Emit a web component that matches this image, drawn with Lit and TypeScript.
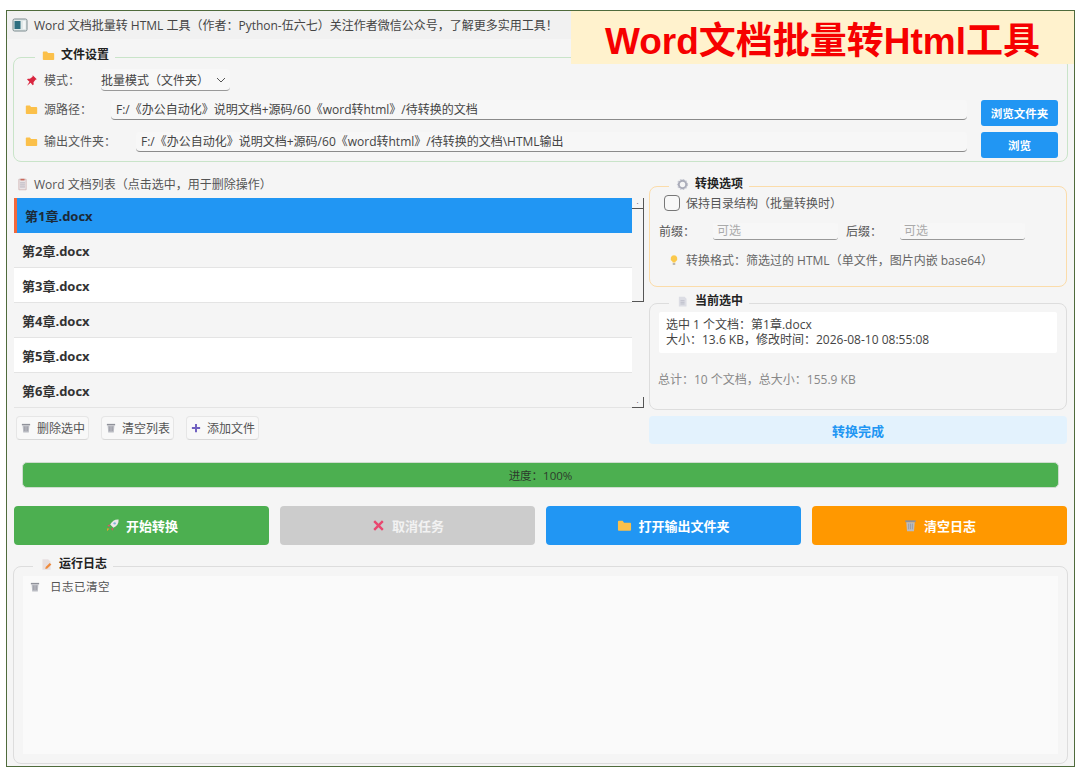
import { LitElement, html, css } from "lit";
import { customElement } from "lit/decorators.js";

const folder = html`<svg class="ic" viewBox="0 0 16 16"><path d="M1 4a1 1 0 0 1 1-1h4l1.5 2H14a1 1 0 0 1 1 1v6.5a1 1 0 0 1-1 1H2a1 1 0 0 1-1-1z" fill="#fbc04a"/></svg>`;
const trash = html`<svg class="ic" viewBox="0 0 16 16"><path d="M2.5 2.5h11v2h-11z" fill="#8f9199"/><path d="M3.5 4.5h9l-.8 9.5H4.3z" fill="#b9bbc2"/><path d="M6 6v6M8 6v6M10 6v6" stroke="#93959d" stroke-width=".8"/></svg>`;
const pin = html`<svg class="ic" viewBox="0 0 16 16"><path d="M9.5 1.5l5 5-1.6.6-2.4 3.2.2 2.6-1.2 1-2.6-3L2.5 14.5l3-5-3-2.6 1-1.2 2.6.2 3.2-2.4z" fill="#d9263f"/></svg>`;
const memo = html`<svg class="ic" viewBox="0 0 16 16"><path d="M3.5 1.5h9v13h-9z" fill="#e9e4e6" stroke="#c9a8a8" stroke-width=".8"/><path d="M5.5 1h5v2h-5z" fill="#c96a5c"/><path d="M5 6h6M5 8.5h6M5 11h6" stroke="#a8a3b0" stroke-width=".9"/></svg>`;
const gear = html`<svg class="ic" viewBox="0 0 16 16"><circle cx="8" cy="8" r="4.6" fill="none" stroke="#a9abb8" stroke-width="2.4"/><circle cx="8" cy="8" r="6.2" fill="none" stroke="#c6c8d2" stroke-width="1.4" stroke-dasharray="2 1.6"/></svg>`;
const doc = html`<svg class="ic" viewBox="0 0 16 16"><path d="M3.5 2h7l2.500 2.500V14h-9.500z" fill="#dcdde4"/><path d="M5.500 7h5M5.500 9h5M5.500 11h5" stroke="#b3b5c2" stroke-width=".9"/></svg>`;
const bulb = html`<svg class="ic" viewBox="0 0 16 16"><path d="M8 1.500a4.500 4.500 0 0 0-2.600 8.100c.6.500.8 1 .8 1.600h3.600c0-.6.200-1.100.8-1.600A4.500 4.500 0 0 0 8 1.500z" fill="#fbc94c"/><path d="M6.300 12.300h3.400v2H6.300z" fill="#a9a49a"/></svg>`;
const plus = html`<svg class="ic" viewBox="0 0 16 16"><path d="M6.700 2.500h2.600v4.200h4.200v2.600H9.300v4.200H6.700V9.300H2.500V6.700h4.200z" fill="#6f5fc0"/></svg>`;
const rocket = html`<svg class="ic" viewBox="0 0 16 16"><path d="M14.500 1.500c-4-.3-7 1.500-9 5.500l3.500 3.500c4-2 5.800-5 5.500-9z" fill="#ece7ea"/><circle cx="10.300" cy="5.700" r="1.300" fill="#7fb3d9"/><path d="M5.500 7L2.500 7.800 4.500 9.500zM9 10.500L8.200 13.500 6.500 11.500z" fill="#e0506a"/><path d="M4.500 11.500L2 14l.5-3z" fill="#f5a623"/></svg>`;
const cross = html`<svg class="ic" viewBox="0 0 16 16"><path d="M2.500 4.300l1.800-1.800L8 6.200l3.700-3.700 1.800 1.800L9.800 8l3.700 3.700-1.800 1.800L8 9.800l-3.700 3.700-1.800-1.800L6.200 8z" fill="#e9476f"/></svg>`;
const note = html`<svg class="ic" viewBox="0 0 16 16"><path d="M3 1.500h7l3 3V14.500H3z" fill="#e7dfe0"/><path d="M7 11l5-5 2 2-5 5-2.500.5z" fill="#ef8a3c"/></svg>`;
const app = html`<svg class="appic" viewBox="0 0 16 16"><rect x="1" y="2" width="14" height="12" rx="1.500" fill="#dfe8e8" stroke="#7d8b8f"/><rect x="2.500" y="4" width="6" height="8" fill="#2f6f80"/><rect x="11" y="4" width="2.500" height="8" fill="#f4f6f6"/></svg>`;

@customElement("app-root")
export class AppRoot extends LitElement {
  static styles = css`
    :host { display: block; height: 777px; background: #fff; font-family: "Open Sans", "Noto Sans CJK SC", sans-serif; font-size: 12px; color: #555; overflow: hidden; }
    * { box-sizing: border-box; }
    .shell { padding: 10px 5px 0 6px; }
    .frame { position: relative; height: 757px; border: 1px solid #4f6b3c; background: #f5f5f5; padding: 0 6px; }
    .ic { width: 13px; height: 13px; flex: none; display: block; }
    .titlebar { height: 28px; margin: 0 -6px; padding: 0 5px; display: flex; align-items: center; gap: 6px; background: #f1f1f1; color: #444; font-size: 12px; white-space: nowrap; }
    .appic { width: 16px; height: 16px; flex: none; }
    .banner { position: absolute; top: 0; right: 0; width: 503px; height: 53px; background: #fff2cd; color: #f60000; font: bold 37px "Liberation Sans", "Noto Sans CJK SC", sans-serif; display: flex; align-items: center; justify-content: center; padding-right: 0; white-space: nowrap; }
    fieldset { margin: 0; min-width: 0; border: 1px solid #ddd; border-radius: 8px; padding: 0; display: block; }
    legend { margin-left: 10px; padding: 0 6px 0 7px; height: 16px; display: flex; align-items: center; gap: 6px; font-weight: 700; color: #222; font-size: 12px; line-height: 14px; position: relative; top: -2px; }
    .files { margin-top: 10px; height: 113px; border-color: #c9e4c9; padding: 2px 9px 0 11px; }
    .row { display: flex; align-items: center; gap: 6px; }
    .mode { height: 22px; margin-top: 2px; }
    .combo { margin-left: 15px; width: 129px; height: 22px; border-radius: 4px; border-bottom: 1px solid #999; background: #f8f8f8; display: flex; align-items: center; justify-content: space-between; padding: 0 0 0 0; color: #444; }
    .chev { width: 10px; height: 6px; margin-right: 4px; }
    .path { align-items: flex-start; margin-top: 9px; height: 26px; }
    .path + .path { margin-top: 6px; }
    .path .lab { line-height: 20px; }
    .path .ic { margin-top: 3px; }
    .input { flex: 1; height: 20px; line-height: 19px; background: #f7f7f7; border-bottom: 1.500px solid #8a8a8a; border-radius: 4px; padding-left: 5px; color: #444; }
    .i1 { margin-left: 13px; }
    .i2 { margin-left: 14px; }
    .browse { width: 77px; height: 26px; margin-left: 8px; border-radius: 3px; background: #2196f3; color: #fff; font-weight: 700; display: flex; align-items: center; justify-content: center; font-size: 11.500px; }
    .main { display: grid; grid-template-columns: 631px 418px; gap: 5px; margin-top: 12px; height: 270px; }
    .lhead { height: 16px; margin: 2px 0 6px 3px; display: flex; align-items: center; gap: 5px; color: #555; }
    .listwrap { display: flex; margin-left: 1px; height: 210px; }
    .list { width: 618px; }
    .item { height: 35px; padding-left: 8px; display: flex; align-items: center; font-weight: 700; font-size: 13px; color: #333; background: #f5f5f5; border-bottom: 1px solid #e4e4e4; }
    .item.alt { background: #fff; }
    .item.sel { background: #2196f3; border-left: 3px solid #f4683a; border-bottom: 0; color: #1c2a38; }
    .sb { width: 12px; display: flex; flex-direction: column; }
    .arrow { height: 11px; border-right: 1px solid #555; border-bottom: 1px solid #555; display: flex; align-items: center; justify-content: center; font-size: 8px; line-height: 8px; color: #333; }
    .thumb { height: 93px; border-right: 1px solid #555; border-bottom: 1px solid #555; }
    .gapfill { flex: 1; }
    .tools { display: flex; gap: 12px; margin: 8px 0 0 3px; }
    .tool { height: 24px; width: 73px; border: 1px solid #e6e6e6; border-bottom-color: #d8d8d8; border-radius: 4px; background: #f8f8f8; display: flex; align-items: center; justify-content: center; gap: 5px; color: #555; }
    .tool .ic { width: 12px; height: 12px; }
    .right { margin-top: 4px; }
    .opts { height: 109px; border-color: #fbdcaa; padding: 0 9px; }
    .chk { display: flex; align-items: center; gap: 6px; margin: 0 0 0 5px; height: 17px; color: #555; }
    .box { width: 16px; height: 16px; border: 1.500px solid #777; border-radius: 4px; background: #f8f8f8; }
    .affix { display: flex; align-items: center; margin-top: 11px; height: 18px; color: #555; }
    .ph { width: 125px; height: 17px; margin: 0 8px 0 18px; line-height: 15px; background: #f7f7f7; border-bottom: 1px solid #999; border-radius: 3px; padding-left: 4px; color: #aaa; }
    .tip { display: flex; align-items: center; gap: 6px; margin: 11px 0 0 9px; color: #666; }
    .tip .ic { width: 12px; height: 12px; }
    .cur { height: 115px; margin-top: 8px; padding: 0 9px; }
    .curbox { background: #fff; height: 41px; margin-top: 1px; padding: 5px 7px; line-height: 15px; color: #444; border-radius: 2px; }
    .total { margin: 19px 0 0 -1px; color: #888; line-height: 16px; }
    .status { margin-top: 6px; height: 28px; background: #e3f2fd; border-radius: 4px; color: #2196f3; font-weight: 700; font-size: 13px; display: flex; align-items: center; justify-content: center; }
    .progress { margin: 18px 9px 0; height: 26px; background: #4caf50; border: 1px solid #cfdccf; border-radius: 5px; display: flex; align-items: center; justify-content: center; color: #2c3a2c; font-size: 11.500px; }
    .actions { display: grid; grid-template-columns: repeat(4, 255px); gap: 11px; margin: 18px 0 0 1px; }
    .act { height: 39px; border-radius: 4px; color: #fff; font-weight: 700; font-size: 13px; display: flex; align-items: center; justify-content: center; gap: 6px; }
    .act .ic { width: 15px; height: 15px; }
    .g { background: #4caf50; } .x { background: #cccccc; color: #f2f2f2; } .b { background: #2196f3; } .o { background: #ff9800; }
    .log { margin-top: 13px; height: 206px; padding: 2px 9px 9px; }
    .logbox { height: 178px; background: #fafafa; padding: 3px 6px; display: flex; align-items: flex-start; gap: 9px; color: #555; font-size: 11.500px; letter-spacing: 0.500px; line-height: 16px; }
    .logbox .ic { width: 12px; height: 12px; margin-top: 2px; }
  `;

  render() {
    const items = ["第1章.docx", "第2章.docx", "第3章.docx", "第4章.docx", "第5章.docx", "第6章.docx"];
    return html`<div class="shell"><div class="frame">
      <div class="titlebar">${app}<span>Word 文档批量转 HTML 工具（作者：Python-伍六七）关注作者微信公众号，了解更多实用工具！</span></div>
      <div class="banner">Word文档批量转Html工具</div>

      <fieldset class="files">
        <legend>${folder}文件设置</legend>
        <div class="row mode">${pin}<span>模式：</span>
          <div class="combo"><span>批量模式（文件夹）</span><svg class="chev" viewBox="0 0 10 6"><path d="M1 1l4 4 4-4" fill="none" stroke="#555"/></svg></div>
        </div>
        <div class="row path">${folder}<span class="lab">源路径：</span>
          <div class="input i1">F:/《办公自动化》说明文档+源码/60《word转html》/待转换的文档</div><div class="browse">浏览文件夹</div></div>
        <div class="row path">${folder}<span class="lab">输出文件夹：</span>
          <div class="input i2">F:/《办公自动化》说明文档+源码/60《word转html》/待转换的文档\\HTML输出</div><div class="browse">浏览</div></div>
      </fieldset>

      <div class="main">
        <div>
          <div class="lhead">${memo}<span>Word 文档列表（点击选中，用于删除操作）</span></div>
          <div class="listwrap">
            <div class="list">
              ${items.map((t, i) => html`<div class="item ${i === 0 ? "sel" : i % 2 === 0 ? "alt" : ""}">${t}</div>`)}
            </div>
            <div class="sb"><div class="arrow">·</div><div class="thumb"></div><div class="gapfill"></div><div class="arrow">·</div></div>
          </div>
          <div class="tools">
            <div class="tool">${trash}删除选中</div>
            <div class="tool">${trash}清空列表</div>
            <div class="tool">${plus}添加文件</div>
          </div>
        </div>
        <div class="right">
          <fieldset class="opts">
            <legend>${gear}转换选项</legend>
            <div class="chk"><div class="box"></div><span>保持目录结构（批量转换时）</span></div>
            <div class="affix"><span>前缀：</span><div class="ph">可选</div><span>后缀：</span><div class="ph">可选</div></div>
            <div class="tip">${bulb}<span>转换格式：筛选过的 HTML（单文件，图片内嵌 base64）</span></div>
          </fieldset>
          <fieldset class="cur">
            <legend>${doc}当前选中</legend>
            <div class="curbox">选中 1 个文档：第1章.docx<br />大小：13.6 KB，修改时间：2026-08-10 08:55:08</div>
            <div class="total">总计：10 个文档，总大小：155.9 KB</div>
          </fieldset>
          <div class="status">转换完成</div>
        </div>
      </div>

      <div class="progress">进度：100%</div>

      <div class="actions">
        <div class="act g">${rocket}开始转换</div>
        <div class="act x">${cross}取消任务</div>
        <div class="act b">${folder}打开输出文件夹</div>
        <div class="act o">${trash}清空日志</div>
      </div>

      <fieldset class="log">
        <legend>${note}运行日志</legend>
        <div class="logbox">${trash}<span>日志已清空</span></div>
      </fieldset>
    </div></div>`;
  }
}
